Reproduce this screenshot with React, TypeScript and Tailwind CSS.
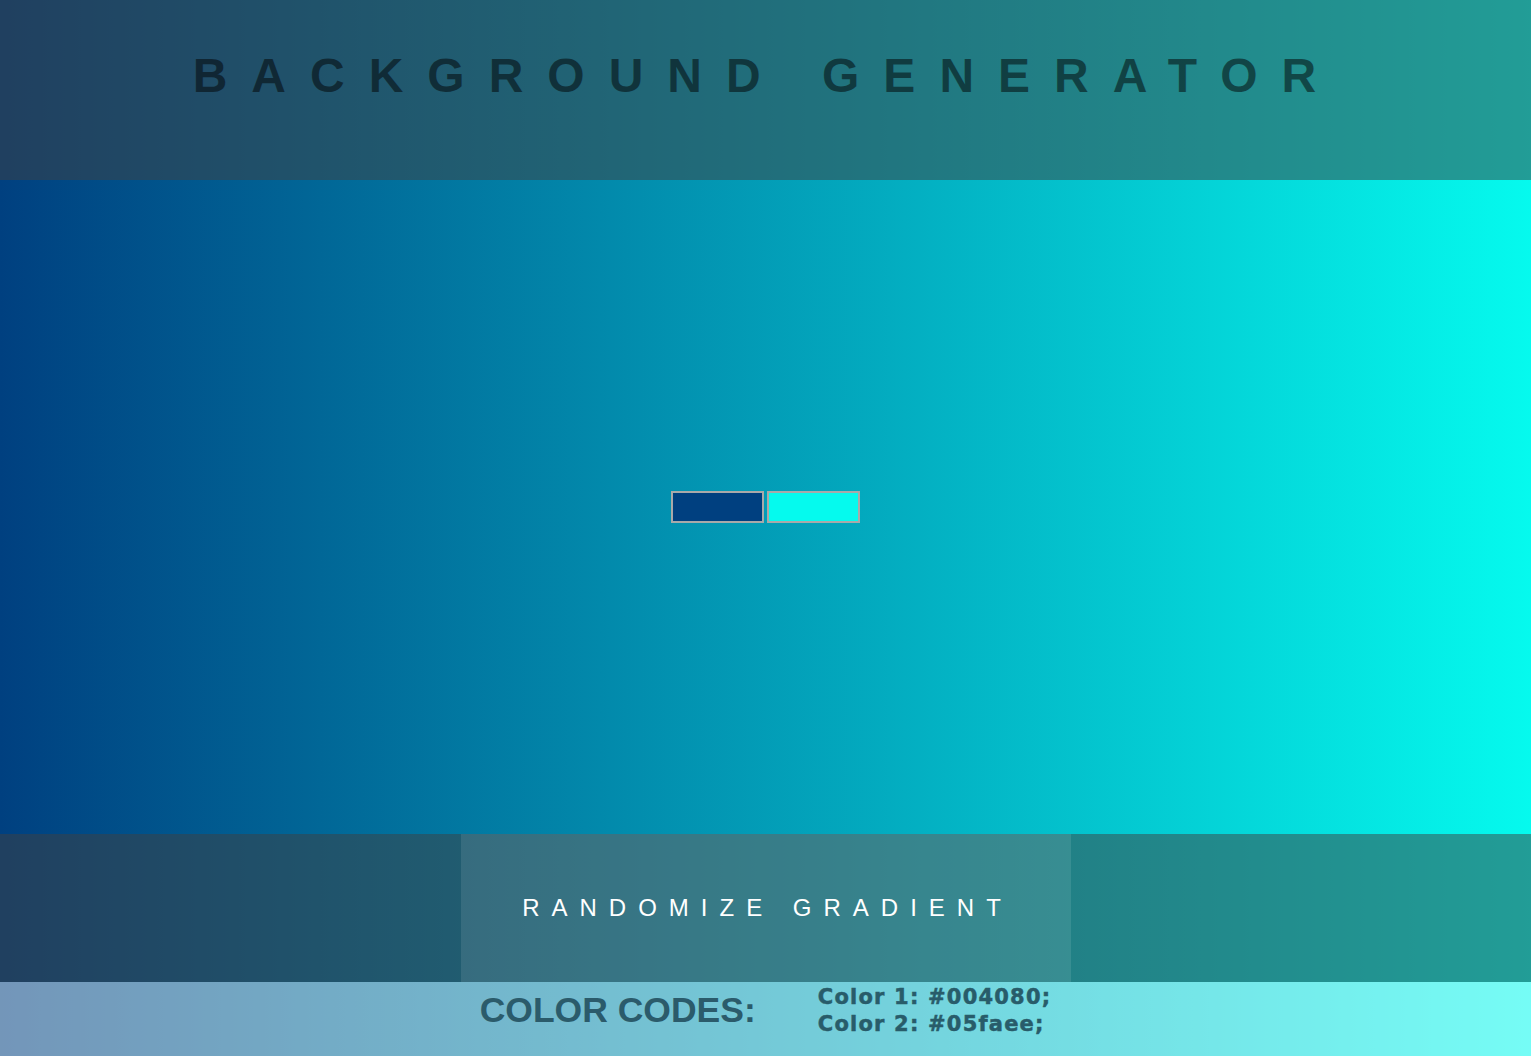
import { useState } from 'react';

function randomHex() {
  return (
    '#' +
    Math.floor(Math.random() * 0xffffff)
      .toString(16)
      .padStart(6, '0')
  );
}

function ColorInput({ value, onChange }: { value: string; onChange: (v: string) => void }) {
  return (
    <input
      type="color"
      value={value}
      onChange={(e) => onChange(e.target.value)}
      className="w-[93px] h-[32px] p-0 border-2 border-[#a9a9a9] bg-transparent cursor-pointer appearance-none [&::-webkit-color-swatch-wrapper]:p-0 [&::-webkit-color-swatch]:border-0"
    />
  );
}

export default function App() {
  const [color1, setColor1] = useState('#004080');
  const [color2, setColor2] = useState('#05faee');

  const gradient = `linear-gradient(to right, ${color1}, ${color2})`;

  return (
    <div
      className="h-screen flex flex-col font-['Liberation_Sans',Arial,sans-serif]"
      style={{ backgroundImage: gradient }}
    >
      <header className="h-[180px] shrink-0 bg-[rgba(64,64,64,0.5)] pt-[52px] pl-[2px] text-center">
        <h1 className="text-[48px] leading-none font-bold tracking-[24px] text-black/50">
          BACKGROUND GENERATOR
        </h1>
      </header>

      <main className="h-[654px] shrink-0 flex items-center justify-center gap-[3px]">
        <ColorInput value={color1} onChange={setColor1} />
        <ColorInput value={color2} onChange={setColor2} />
      </main>

      <div className="h-[148px] shrink-0 flex justify-center bg-[rgba(64,64,64,0.5)]">
        <button
          type="button"
          onClick={() => {
            setColor1(randomHex());
            setColor2(randomHex());
          }}
          className="w-[610px] h-full bg-white/10 text-white text-[24px] leading-none tracking-[12px] pl-[4px]"
        >
          RANDOMIZE GRADIENT
        </button>
      </div>

      <footer className="h-[74px] shrink-0 bg-white/45">
        <div className="flex justify-center items-center gap-[62px] pt-[2px]">
          <h3 className="text-[35.5px] leading-none font-bold text-[#2b5b6b]">COLOR CODES:</h3>
          <div className="font-['DejaVu_Sans',sans-serif] font-bold text-[21px] leading-[27px] tracking-[1.2px] text-[#285c6a] [-webkit-text-stroke:0.5px_#285c6a]">
            <p>Color 1: {color1};</p>
            <p>Color 2: {color2};</p>
          </div>
        </div>
      </footer>
    </div>
  );
}
